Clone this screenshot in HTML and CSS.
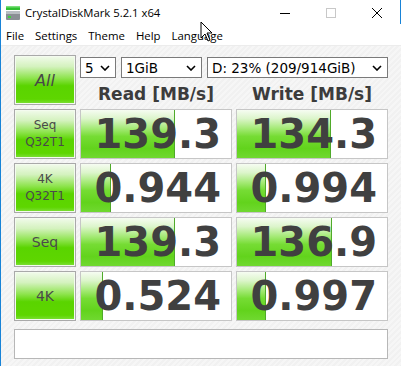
FILE: index.html
```html
<!DOCTYPE html>
<html lang="en">
<head>
  <meta charset="UTF-8" />
  <meta name="viewport" content="width=device-width, initial-scale=1.0" />
  <title>CrystalDiskMark 5.2.1 x64</title>
  <link rel="stylesheet" href="styles.css">
</head>
<body>
  <div class="window">
    <div class="titlebar">
      <svg class="app-icon" width="16" height="16" viewBox="0 0 16 16">
        <rect x="1" y="1" width="14" height="4" fill="#2fbf2f"/>
        <rect x="1" y="1" width="14" height="1.5" fill="#7be07b"/>
        <rect x="1" y="6" width="14" height="9" rx="1" fill="#8a8f94"/>
        <rect x="1" y="6" width="14" height="3" fill="#b9bec2"/>
        <rect x="3" y="11" width="3" height="2" fill="#3fd23f"/>
      </svg>
      <span class="title">CrystalDiskMark 5.2.1 x64</span>
      <div class="controls">
        <svg class="ctl" width="46" height="24" viewBox="0 0 46 24"><line x1="18" y1="13.5" x2="28" y2="13.5" stroke="#000" stroke-width="1"/></svg>
        <svg class="ctl" width="46" height="24" viewBox="0 0 46 24"><rect x="18.5" y="8.5" width="9" height="9" fill="none" stroke="#c8c8c8" stroke-width="1"/></svg>
        <svg class="ctl" width="46" height="24" viewBox="0 0 46 24"><path d="M18 8 L28 18 M28 8 L18 18" stroke="#000" stroke-width="1"/></svg>
      </div>
    </div>

    <div class="menubar">
      <span class="menu-item">File</span>
      <span class="menu-item">Settings</span>
      <span class="menu-item">Theme</span>
      <span class="menu-item">Help</span>
      <span class="menu-item">Language</span>
    </div>

    <div class="client">
      <div class="grid">
        <div class="label all">All</div>
        <div class="top-right">
          <div class="selects">
            <div class="select s-count"><span>5</span><svg width="10" height="6" viewBox="0 0 10 6"><path d="M1 1 L5 5 L9 1" fill="none" stroke="#000" stroke-width="1.6"/></svg></div>
            <div class="select s-size"><span>1GiB</span><svg width="10" height="6" viewBox="0 0 10 6"><path d="M1 1 L5 5 L9 1" fill="none" stroke="#000" stroke-width="1.6"/></svg></div>
            <div class="select s-drive"><span>D: 23% (209/914GiB)</span><svg width="10" height="6" viewBox="0 0 10 6"><path d="M1 1 L5 5 L9 1" fill="none" stroke="#000" stroke-width="1.6"/></svg></div>
          </div>
          <div class="heads">
            <div class="head">Read [MB/s]</div>
            <div class="head">Write [MB/s]</div>
          </div>
        </div>

        <div class="label">Seq<br>Q32T1</div>
        <div class="result"><div class="bar" style="width: 94px"></div><span class="num">139.3</span></div>
        <div class="result"><div class="bar" style="width: 94px"></div><span class="num">134.3</span></div>

        <div class="label">4K<br>Q32T1</div>
        <div class="result"><div class="bar" style="width: 30px"></div><span class="num">0.944</span></div>
        <div class="result"><div class="bar" style="width: 29px"></div><span class="num">0.994</span></div>

        <div class="label single">Seq</div>
        <div class="result"><div class="bar" style="width: 94px"></div><span class="num">139.3</span></div>
        <div class="result"><div class="bar" style="width: 95px"></div><span class="num">136.9</span></div>

        <div class="label single">4K</div>
        <div class="result"><div class="bar" style="width: 22px"></div><span class="num">0.524</span></div>
        <div class="result"><div class="bar" style="width: 29px"></div><span class="num">0.997</span></div>
      </div>
      <div class="comment"></div>
    </div>

    <svg class="cursor" width="14" height="22" viewBox="0 0 14 22">
      <path d="M1 1 L1 17 L5 13 L8 20 L10 19 L7 12 L12 12 Z" fill="#fff" stroke="#000" stroke-width="1"/>
    </svg>
  </div>
</body>
</html>
```

FILE: styles.css
```css
* {
  box-sizing: border-box;
}

body {
  margin: 0;
  background: #f0f0f0;
  font-family: "DejaVu Sans", sans-serif;
}

.window {
  position: relative;
  width: 401px;
  height: 366px;
  border-left: 1px solid #1883d7;
  overflow: hidden;
}

.titlebar {
  display: flex;
  align-items: center;
  height: 24px;
  background: #fff;
  border-right: 1px solid #1883d7;
  padding-left: 4px;
}

.app-icon {
  margin-top: 1px;
}

.title {
  margin-left: 4px;
  font-family: "Open Sans", sans-serif;
  font-size: 11.3px;
  color: #000;
}

.controls {
  margin-left: auto;
  display: flex;
}

.ctl {
  display: block;
}

.menubar {
  display: flex;
  height: 21px;
  background: #fff;
  padding-top: 2px;
  align-items: center;
}

.menu-item {
  font-family: "Open Sans", sans-serif;
  font-size: 11.4px;
  padding: 0 6px 0 5px;
  color: #000;
}

.client {
  height: 321px;
  padding: 9px 0 0 13px;
  border-top: 1px solid #ececec;
  background: repeating-linear-gradient(135deg, #f1f1f1 0 2px, #f6f6f6 2px 4px);
}

.grid {
  display: grid;
  grid-template-columns: 62px 152px 152px;
  grid-auto-rows: 50px;
  gap: 4px;
}

.label {
  display: flex;
  align-items: center;
  justify-content: center;
  text-align: center;
  font-size: 12px;
  line-height: 17px;
  color: #4a4a4a;
  border: 1px solid #a9a9a9;
  box-shadow: inset 0 0 0 1px #f4fbef;
  background: linear-gradient(#f2fbec 0%, #d4f2be 22%, #8ee44e 46%, #5ad400 62%, #5ed600 90%, #7fe03c 100%);
}

.label.single {
  font-size: 14px;
}

.label.all {
  font-size: 16px;
  font-style: italic;
  color: #474747;
}

.top-right {
  grid-column: span 2;
  display: flex;
  flex-direction: column;
}

.selects {
  display: flex;
  gap: 5px;
  margin-top: 2px;
  height: 21px;
}

.select {
  display: flex;
  align-items: center;
  justify-content: space-between;
  background: #fff;
  border: 1px solid #7a7a7a;
  padding: 0 5px 0 4px;
  font-size: 13.5px;
  color: #000;
}

.s-count {
  width: 36px;
}

.s-size {
  width: 81px;
}

.s-drive {
  flex: 1;
}

.heads {
  display: grid;
  grid-template-columns: 152px 152px;
  gap: 4px;
  flex: 1;
  align-items: center;
}

.head {
  text-align: center;
  font-weight: bold;
  font-size: 17px;
  color: #3c3c3c;
  padding-top: 4px;
}

.result {
  position: relative;
  display: flex;
  align-items: center;
  justify-content: flex-end;
  background: #fff;
  border: 1px solid #c6c6c6;
  padding-right: 10px;
}

.bar {
  position: absolute;
  left: 0;
  top: 0;
  bottom: 0;
  border-right: 1px solid #4faa2a;
  background: linear-gradient(#f6fcf2 0%, #dcf5cb 18%, #a6ea78 38%, #76dc34 55%, #62d31c 80%, #70d830 100%);
}

.num {
  position: relative;
  font-weight: bold;
  font-size: 40px;
  color: #404040;
  line-height: 1;
}

.comment {
  margin-top: 8px;
  width: 374px;
  height: 30px;
  background: #fff;
  border: 1px solid #b7b7b7;
}

.cursor {
  position: absolute;
  left: 199px;
  top: 21px;
}
```
